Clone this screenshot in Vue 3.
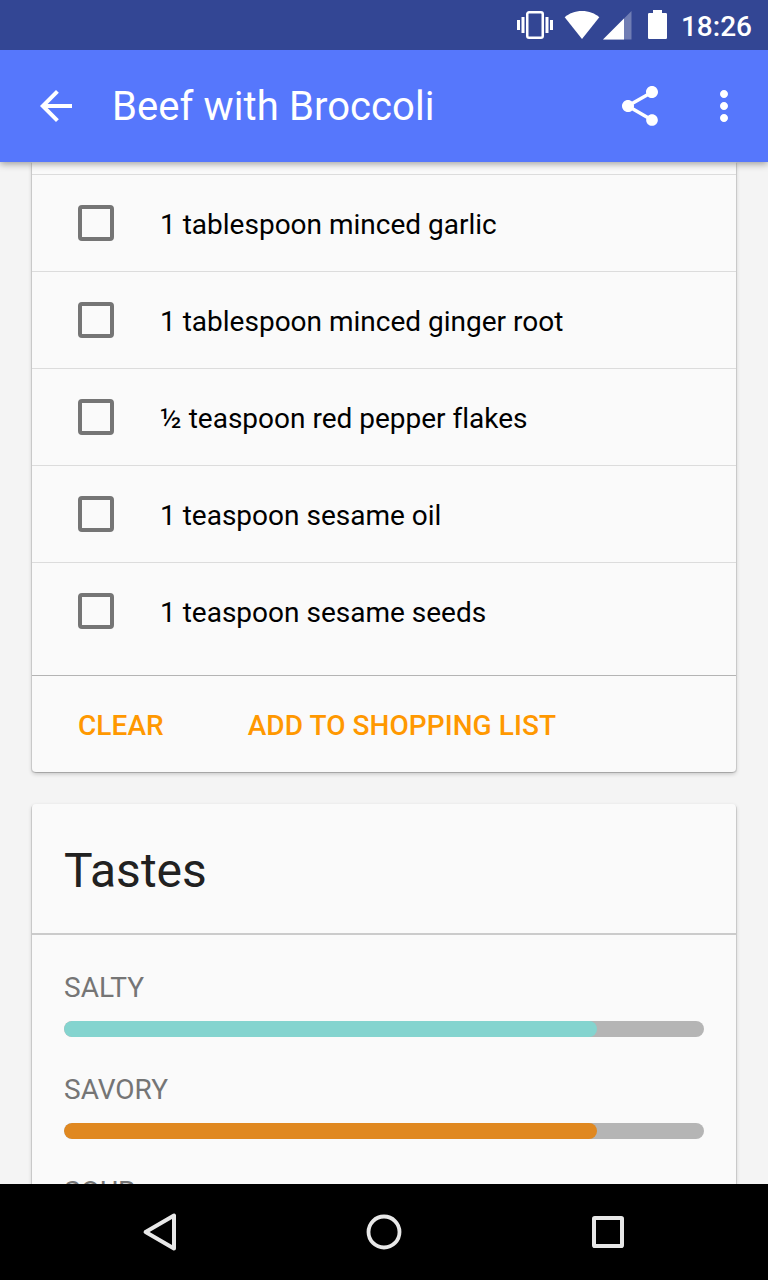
<script setup>
const ingredients = [
  '1 tablespoon minced garlic',
  '1 tablespoon minced ginger root',
  '½ teaspoon red pepper flakes',
  '1 teaspoon sesame oil',
  '1 teaspoon sesame seeds',
]
const tastes = [
  { name: 'SALTY', value: 83.33, color: '#84d4cf' },
  { name: 'SAVORY', value: 83.33, color: '#e08820' },
  { name: 'SOUR', value: 16.67, color: '#c6d84a' },
]
</script>

<template>
  <div class="screen">
    <div class="status">
      <svg class="vibrate" width="36" height="28" viewBox="0 0 36 28" fill="#fff">
        <rect x="10.25" y="1.25" width="15.5" height="25.5" rx="1.8" fill="none" stroke="#fff" stroke-width="2.5" />
        <path d="M0 9h3v10H0zM4.5 6h3v16h-3zM28.5 6h3v16h-3zM33 9h3v10h-3z" />
      </svg>
      <svg class="wifi" width="36" height="28" viewBox="0 0 36 28">
        <path d="M18 28 .7 6.2C5 2.4 11 0 18 0s13 2.4 17.3 6.2z" fill="#fff" />
      </svg>
      <svg class="signal" width="29" height="29" viewBox="0 0 29 29">
        <path d="M0 28.5 28.5 0v28.5z" fill="#fff" fill-opacity=".3" />
        <path d="M0 28.5 21 7.5v21z" fill="#fff" />
      </svg>
      <svg class="battery" width="19" height="29" viewBox="0 0 19 29">
        <path d="M5 0h9v3h3.8Q19 3 19 4.2v23.6q0 1.2-1.2 1.2H1.2Q0 29 0 27.8V4.2Q0 3 1.2 3H5z" fill="#fff" />
      </svg>
      <span class="clock">18:26</span>
    </div>

    <header class="appbar">
      <svg class="back" width="48" height="48" viewBox="0 0 24 24" fill="#fff">
        <path d="M20 11H7.83l5.59-5.59L12 4l-8 8 8 8 1.41-1.41L7.83 13H20v-2z" />
      </svg>
      <h1>Beef with Broccoli</h1>
      <svg class="share" width="48" height="48" viewBox="0 0 24 24" fill="#fff">
        <path d="M18 16.08c-.76 0-1.44.3-1.96.77L8.91 12.7c.05-.23.09-.46.09-.7s-.04-.47-.09-.7l7.05-4.11c.54.5 1.25.81 2.04.81 1.66 0 3-1.34 3-3s-1.34-3-3-3-3 1.34-3 3c0 .24.04.47.09.7L8.04 9.81C7.5 9.31 6.79 9 6 9c-1.66 0-3 1.34-3 3s1.34 3 3 3c.79 0 1.5-.31 2.04-.81l7.12 4.16c-.05.21-.08.43-.08.65 0 1.61 1.31 2.92 2.92 2.92s2.92-1.31 2.92-2.92-1.31-2.92-2.92-2.92z" />
      </svg>
      <svg class="more" width="48" height="48" viewBox="0 0 24 24" fill="#fff">
        <path d="M12 8c1.1 0 2-.9 2-2s-.9-2-2-2-2 .9-2 2 .9 2 2 2zm0 2c-1.1 0-2 .9-2 2s.9 2 2 2 2-.9 2-2-.9-2-2-2zm0 6c-1.1 0-2 .9-2 2s.9 2 2 2 2-.9 2-2-.9-2-2-2z" />
      </svg>
    </header>

    <main class="content">
      <section class="card ingredients">
        <ul>
          <li v-for="item in ingredients" :key="item">
            <span class="box"></span>
            <span class="item">{{ item }}</span>
          </li>
        </ul>
        <div class="actions">
          <button>CLEAR</button>
          <button>ADD TO SHOPPING LIST</button>
        </div>
      </section>

      <section class="card tastes">
        <h2>Tastes</h2>
        <div class="meters">
          <div v-for="t in tastes" :key="t.name" class="meter">
            <span class="label">{{ t.name }}</span>
            <div class="track">
              <div class="fill" :style="{ width: t.value + '%', background: t.color }"></div>
            </div>
          </div>
        </div>
      </section>
    </main>

    <nav class="navbar">
      <svg width="48" height="48" viewBox="0 0 48 48" fill="none" stroke="#e8e8e8" stroke-width="4" stroke-linejoin="round">
        <path d="M38 7.6v32.8L9.6 24z" />
      </svg>
      <svg width="48" height="48" viewBox="0 0 48 48" fill="none" stroke="#e8e8e8" stroke-width="3.8">
        <circle cx="24" cy="24" r="15.5" />
      </svg>
      <svg width="48" height="48" viewBox="0 0 48 48" fill="none" stroke="#e8e8e8" stroke-width="4" stroke-linejoin="round">
        <rect x="10" y="10" width="28" height="28" rx="0.8" />
      </svg>
    </nav>
  </div>
</template>

<style>
body {
  margin: 0;
}
</style>

<style scoped>
.screen {
  width: 768px;
  height: 1280px;
  display: flex;
  flex-direction: column;
  overflow: hidden;
  background: #f4f4f4;
  font-family: Roboto, sans-serif;
  font-variant-ligatures: none;
}
svg {
  display: block;
  flex: none;
}
.status {
  flex: none;
  height: 50px;
  box-sizing: border-box;
  padding: 0 16px 0 517px;
  display: flex;
  align-items: flex-start;
  background: #334694;
  color: #fff;
  z-index: 2;
}
.vibrate {
  margin-top: 11px;
}
.wifi {
  margin: 11px 0 0 11px;
}
.signal {
  margin: 11px 0 0 3px;
}
.battery {
  margin: 10px 0 0 16px;
}
.clock {
  margin-left: auto;
  font-size: 28px;
  font-weight: 500;
  line-height: 54px;
}
.appbar {
  flex: none;
  height: 112px;
  box-sizing: border-box;
  padding: 0 20px 0 32px;
  display: flex;
  align-items: center;
  background: #5677fc;
  color: #fff;
  z-index: 1;
  box-shadow: 0 2px 7px rgba(0, 0, 0, 0.36);
}
h1 {
  flex: 1;
  margin: 0 0 0 32px;
  padding-top: 2px;
  font-size: 40px;
  font-weight: 400;
  line-height: 48px;
  letter-spacing: 0.09px;
}
.more {
  margin-left: 36px;
}
.content {
  flex: 1;
  min-height: 0;
  overflow: hidden;
  display: flex;
  flex-direction: column;
  gap: 32px;
  padding: 0 32px;
}
.card {
  flex: none;
  background: #fafafa;
  border-radius: 4px;
  box-shadow:
    0 2px 4px rgba(0, 0, 0, 0.2),
    1px 1px 0 rgba(0, 0, 0, 0.1),
    -1px 1px 0 rgba(0, 0, 0, 0.1);
}
.ingredients {
  border-radius: 0 0 4px 4px;
}
ul {
  list-style: none;
  margin: 0;
  padding: 12px 0 16px;
}
li {
  height: 96px;
  border-top: 1px solid #dcdcdc;
  display: flex;
  align-items: center;
  padding-left: 46px;
}
.box {
  box-sizing: border-box;
  width: 36px;
  height: 36px;
  border: 4px solid #757575;
  border-radius: 4px;
}
.item {
  margin-left: 46px;
  padding-top: 3px;
  font-size: 28px;
  line-height: 32px;
  color: #000;
}
.actions {
  height: 96px;
  border-top: 1px solid #b4b4b4;
  display: flex;
  align-items: center;
  gap: 84px;
  padding-left: 46px;
}
button {
  border: 0;
  padding: 3px 0 0;
  background: none;
  font-family: inherit;
  font-size: 28px;
  font-weight: 500;
  line-height: 32px;
  letter-spacing: 0.06px;
  color: #ff9800;
}
h2 {
  margin: 0;
  padding: 2px 32px 0;
  height: 127px;
  border-bottom: 2px solid #cbcbcb;
  font-size: 48px;
  font-weight: 400;
  line-height: 129px;
  color: #212121;
}
.meters {
  display: flex;
  flex-direction: column;
  gap: 35px;
  padding: 35px 32px 32px;
}
.meter {
  display: flex;
  flex-direction: column;
  gap: 15px;
}
.label {
  font-size: 28px;
  line-height: 36px;
  color: #757575;
}
.track {
  height: 16px;
  border-radius: 8px;
  background: #b5b5b5;
  overflow: hidden;
}
.fill {
  height: 100%;
  border-radius: 8px;
}
.navbar {
  flex: none;
  height: 96px;
  display: flex;
  align-items: center;
  justify-content: center;
  gap: 176px;
  background: #000;
  z-index: 1;
}
</style>
